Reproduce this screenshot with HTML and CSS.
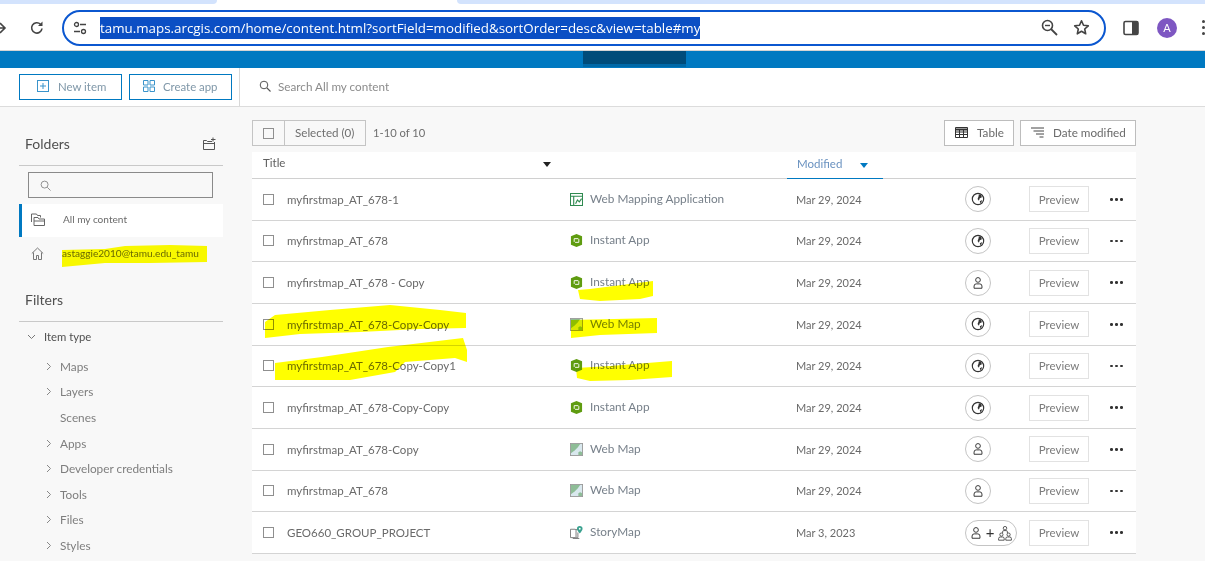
FILE: index.html
```html
<!DOCTYPE html>
<html lang="en">
<head>
<meta charset="UTF-8" />
<title>My content</title>
<link rel="stylesheet" href="styles.css">
</head>
<body>

<svg width="0" height="0" class="defs">
  <defs>
    <symbol id="i-instant" viewBox="0 0 14 14">
      <path d="M7 0l6 2.500v9L7 14 1 11.500v-9z" fill="#5f9c10"/>
      <path d="M4.500 8.500V5h4.500M9.500 5.500V9H5.500" fill="none" stroke="#fff" stroke-width="1"/>
    </symbol>
    <symbol id="i-webmap" viewBox="0 0 14 14">
      <rect x=".5" y=".5" width="13" height="13" fill="#d9e8ee" stroke="#9a9a9a"/>
      <path d="M1 1h10L8 5 5 8 1 11z" fill="#8ebd97"/>
      <path d="M9 13v-3l2-1 2 1v3z" fill="#8ebd97"/>
    </symbol>
    <symbol id="i-webapp" viewBox="0 0 14 14">
      <rect x=".5" y=".5" width="13" height="13" fill="none" stroke="#2f8a50" stroke-width="1.200"/>
      <path d="M1 3.500h12M4 4v9M6 11.500l2-4 2 2 2.500-3.500" fill="none" stroke="#2f8a50" stroke-width="1.200"/>
    </symbol>
    <symbol id="i-story" viewBox="0 0 14 14">
      <path d="M.5 3.500h5l1 .5v9l-1-.5h-5zM6.500 4l2-.5M8.500 7v5.500l-2 .5M3 13.500h7" fill="none" stroke="#777"/>
      <path d="M10.500 0a3 3 0 0 1 3 3c0 2-3 5-3 5s-3-3-3-5a3 3 0 0 1 3-3z" fill="#3aa18f"/>
      <circle cx="10.500" cy="3" r="1" fill="#fff"/>
    </symbol>
    <symbol id="i-globe" viewBox="0 0 16 16">
      <circle cx="8" cy="8" r="6.500" fill="none" stroke="#333" stroke-width="1.300"/>
      <path d="M9 2.500l2.500 1 1 2.500-2.500 1-1 3-1.500-2 1-2.500zM10 10.500l3-1.500-2 4z" fill="#333"/>
    </symbol>
    <symbol id="i-user" viewBox="0 0 16 16">
      <circle cx="8" cy="4.500" r="2.700" fill="none" stroke="#333" stroke-width="1.100"/>
      <path d="M3.500 14v-2.500a2.500 2.500 0 0 1 2.500-2.500h4a2.500 2.500 0 0 1 2.500 2.500V14z" fill="none" stroke="#333" stroke-width="1.100"/>
    </symbol>
    <symbol id="i-org" viewBox="0 0 20 20">
      <circle cx="10" cy="4" r="2.200" fill="none" stroke="#333"/>
      <path d="M7 10V8.500A1.500 1.500 0 0 1 8.500 7h3A1.500 1.500 0 0 1 13 8.500V10" fill="none" stroke="#333"/>
      <circle cx="5.500" cy="12" r="2" fill="none" stroke="#333"/>
      <circle cx="14.500" cy="12" r="2" fill="none" stroke="#333"/>
      <path d="M2 19v-2a2 2 0 0 1 2-2h3a2 2 0 0 1 2 2v2zM11 19v-2a2 2 0 0 1 2-2h3a2 2 0 0 1 2 2v2z" fill="none" stroke="#333"/>
    </symbol>
  </defs>
</svg>

<div class="tabstrip"><div class="strip-left"></div><div class="strip-right"></div></div>

<header class="browserbar">
  <svg class="nav-icon nav-forward" width="16" height="16" viewBox="0 0 16 16"><path d="M1 8h12M8 3l5 5-5 5" fill="none" stroke="#444" stroke-width="1.600"/></svg>
  <svg class="nav-icon nav-reload" width="16" height="16" viewBox="0 0 16 16"><path d="M13 8.500A5.200 5.200 0 1 1 11.500 4.200" fill="none" stroke="#444" stroke-width="1.600"/><path d="M13.500 1.500v4.500H9z" fill="#444"/></svg>
  <div class="omnibox">
    <svg class="tune" width="14" height="14" viewBox="0 0 14 14"><circle cx="3.500" cy="3.500" r="2" fill="none" stroke="#444" stroke-width="1.300"/><path d="M7 3.500h6M1 10.500h6" stroke="#444" stroke-width="1.300"/><circle cx="10.500" cy="10.500" r="2" fill="none" stroke="#444" stroke-width="1.300"/></svg>
    <span class="url">tamu.maps.arcgis.com/home/content.html?sortField=modified&amp;sortOrder=desc&amp;view=table#my</span>
    <svg class="omni-zoom" width="17" height="17" viewBox="0 0 17 17"><circle cx="6.500" cy="6.500" r="5" fill="none" stroke="#444" stroke-width="1.600"/><path d="M10 10l6 6" stroke="#444" stroke-width="1.800"/><path d="M4 6.500h5" stroke="#444" stroke-width="1.400"/></svg>
    <svg class="omni-star" width="17" height="17" viewBox="0 0 17 17"><path d="M8.500 1.800l2 4.500 4.800.5-3.600 3.200 1 4.800-4.200-2.500-4.200 2.500 1-4.800L1.700 6.800l4.800-.5z" fill="none" stroke="#444" stroke-width="1.600" stroke-linejoin="round"/></svg>
  </div>
  <svg class="side-panel" width="16" height="16" viewBox="0 0 16 16"><rect x="1" y="1.500" width="14" height="13" rx="1.500" fill="#fff" stroke="#444" stroke-width="1.600"/><rect x="9" y="1.500" width="6" height="13" fill="#444"/></svg>
  <div class="avatar">A</div>
  <div class="kebab"><i></i><i></i><i></i></div>
</header>

<div class="agol-band"><div class="agol-band-active"></div></div>

<div class="toolbar">
  <div class="toolbar-left">
    <button class="tool-btn btn-new">
      <svg width="12" height="12" viewBox="0 0 12 12"><rect x=".5" y=".5" width="11" height="11" fill="none" stroke="#3b94cb"/><path d="M6 3v6M3 6h6" stroke="#3b94cb"/></svg>
      New item
    </button>
    <button class="tool-btn btn-create">
      <svg width="12" height="12" viewBox="0 0 12 12"><path d="M.5.5h4.500v4.500H.5zM7 .5h4.500v4.500H7zM.5 7h4.500v4.500H.5zM7 7h4.500v4.500H7z" fill="none" stroke="#3b94cb"/></svg>
      Create app
    </button>
  </div>
  <div class="toolbar-search">
    <svg width="12" height="12" viewBox="0 0 12 12"><circle cx="5" cy="5" r="3.800" fill="none" stroke="#555"/><path d="M8 8l3.500 3.500" stroke="#555" stroke-width="1.100"/></svg>
    Search All my content
  </div>
</div>

<div class="page">
  <aside class="sidebar">
    <div class="side-head folders-head">
      <span>Folders</span>
      <svg width="13" height="13" viewBox="0 0 13 13"><path d="M.5 12.500V3.500h3l1 1h4.500M.5 12.500h11V5M.5 6.500h11M10 .5v4M8 2.500h4.500" fill="none" stroke="#555"/></svg>
    </div>
    <div class="folder-search">
      <svg width="11" height="11" viewBox="0 0 12 12"><circle cx="5" cy="5" r="3.800" fill="none" stroke="#888"/><path d="M8 8l3.500 3.500" stroke="#888"/></svg>
    </div>
    <div class="folder folder-active">
      <svg width="14" height="13" viewBox="0 0 14 13"><path d="M.5 9V1h5l1 1.500h3v2M3 12.500v-8h4l1 1.500h5.500v6.500zM3 8h10.500" fill="none" stroke="#666"/></svg>
      <span>All my content</span>
    </div>
    <div class="folder">
      <svg width="13" height="13" viewBox="0 0 13 13"><path d="M.8 6.500L6.500 1l5.700 5.500M2.500 5.500v7h3v-4h2v4h3v-7" fill="none" stroke="#777"/></svg>
      <span>astaggie2010@tamu.edu_tamu</span>
    </div>
    <div class="side-head filters-head"><span>Filters</span></div>
    <div class="filter-group">
      <svg class="chev" width="9" height="9" viewBox="0 0 9 9"><path d="M1 3l3.500 3.500L8 3" fill="none" stroke="#777"/></svg>
      Item type
    </div>
    <ul class="filter-list">
      <li><svg class="chev" width="9" height="9" viewBox="0 0 9 9"><path d="M3 1l3.500 3.500L3 8" fill="none" stroke="#888"/></svg>Maps</li>
      <li><svg class="chev" width="9" height="9" viewBox="0 0 9 9"><path d="M3 1l3.500 3.500L3 8" fill="none" stroke="#888"/></svg>Layers</li>
      <li class="no-chev">Scenes</li>
      <li><svg class="chev" width="9" height="9" viewBox="0 0 9 9"><path d="M3 1l3.500 3.500L3 8" fill="none" stroke="#888"/></svg>Apps</li>
      <li><svg class="chev" width="9" height="9" viewBox="0 0 9 9"><path d="M3 1l3.500 3.500L3 8" fill="none" stroke="#888"/></svg>Developer credentials</li>
      <li><svg class="chev" width="9" height="9" viewBox="0 0 9 9"><path d="M3 1l3.500 3.500L3 8" fill="none" stroke="#888"/></svg>Tools</li>
      <li><svg class="chev" width="9" height="9" viewBox="0 0 9 9"><path d="M3 1l3.500 3.500L3 8" fill="none" stroke="#888"/></svg>Files</li>
      <li><svg class="chev" width="9" height="9" viewBox="0 0 9 9"><path d="M3 1l3.500 3.500L3 8" fill="none" stroke="#888"/></svg>Styles</li>
    </ul>
  </aside>

  <main class="content">
    <div class="content-top">
      <div class="select-box"><span class="select-check"><i class="check"></i></span><span class="select-label">Selected (0)</span></div>
      <span class="count">1-10 of 10</span>
      <button class="view-btn btn-table">
        <svg width="13" height="11" viewBox="0 0 13 11"><path d="M.5.5h12v10H.5z" fill="none" stroke="#333"/><path d="M.5 2.500h12" stroke="#333" stroke-width="2"/><path d="M.5 5h12M.5 7.500h12M4.500 3v7M8.500 3v7" stroke="#333"/></svg>
        Table
      </button>
      <button class="view-btn btn-date">
        <svg width="13" height="11" viewBox="0 0 13 11"><path d="M0 1h13M2.500 4h10.500M5 7h8M8.500 10h4" stroke="#444"/></svg>
        Date modified
      </button>
    </div>

    <div class="table">
      <div class="thead">
        <div class="th-title">Title<i class="caret caret-dark"></i></div>
        <div class="th-modified">Modified<i class="caret caret-blue"></i></div>
      </div>

      <div class="row">
        <i class="check"></i><span class="title">myfirstmap_AT_678-1</span>
        <svg class="type-icon"><use href="#i-webapp"/></svg><span class="type">Web Mapping Application</span>
        <span class="date">Mar 29, 2024</span>
        <span class="share"><svg width="14" height="14"><use href="#i-globe"/></svg></span>
        <button class="preview">Preview</button><span class="dots"><i></i><i></i><i></i></span>
      </div>
      <div class="row">
        <i class="check"></i><span class="title">myfirstmap_AT_678</span>
        <svg class="type-icon"><use href="#i-instant"/></svg><span class="type">Instant App</span>
        <span class="date">Mar 29, 2024</span>
        <span class="share"><svg width="14" height="14"><use href="#i-globe"/></svg></span>
        <button class="preview">Preview</button><span class="dots"><i></i><i></i><i></i></span>
      </div>
      <div class="row">
        <i class="check"></i><span class="title">myfirstmap_AT_678 - Copy</span>
        <svg class="type-icon"><use href="#i-instant"/></svg><span class="type">Instant App</span>
        <span class="date">Mar 29, 2024</span>
        <span class="share"><svg width="14" height="14"><use href="#i-user"/></svg></span>
        <button class="preview">Preview</button><span class="dots"><i></i><i></i><i></i></span>
      </div>
      <div class="row">
        <i class="check"></i><span class="title">myfirstmap_AT_678-Copy-Copy</span>
        <svg class="type-icon"><use href="#i-webmap"/></svg><span class="type">Web Map</span>
        <span class="date">Mar 29, 2024</span>
        <span class="share"><svg width="14" height="14"><use href="#i-globe"/></svg></span>
        <button class="preview">Preview</button><span class="dots"><i></i><i></i><i></i></span>
      </div>
      <div class="row">
        <i class="check"></i><span class="title">myfirstmap_AT_678-Copy-Copy1</span>
        <svg class="type-icon"><use href="#i-instant"/></svg><span class="type">Instant App</span>
        <span class="date">Mar 29, 2024</span>
        <span class="share"><svg width="14" height="14"><use href="#i-globe"/></svg></span>
        <button class="preview">Preview</button><span class="dots"><i></i><i></i><i></i></span>
      </div>
      <div class="row">
        <i class="check"></i><span class="title">myfirstmap_AT_678-Copy-Copy</span>
        <svg class="type-icon"><use href="#i-instant"/></svg><span class="type">Instant App</span>
        <span class="date">Mar 29, 2024</span>
        <span class="share"><svg width="14" height="14"><use href="#i-globe"/></svg></span>
        <button class="preview">Preview</button><span class="dots"><i></i><i></i><i></i></span>
      </div>
      <div class="row">
        <i class="check"></i><span class="title">myfirstmap_AT_678-Copy</span>
        <svg class="type-icon"><use href="#i-webmap"/></svg><span class="type">Web Map</span>
        <span class="date">Mar 29, 2024</span>
        <span class="share"><svg width="14" height="14"><use href="#i-user"/></svg></span>
        <button class="preview">Preview</button><span class="dots"><i></i><i></i><i></i></span>
      </div>
      <div class="row">
        <i class="check"></i><span class="title">myfirstmap_AT_678</span>
        <svg class="type-icon"><use href="#i-webmap"/></svg><span class="type">Web Map</span>
        <span class="date">Mar 29, 2024</span>
        <span class="share"><svg width="14" height="14"><use href="#i-user"/></svg></span>
        <button class="preview">Preview</button><span class="dots"><i></i><i></i><i></i></span>
      </div>
      <div class="row">
        <i class="check"></i><span class="title">GEO660_GROUP_PROJECT</span>
        <svg class="type-icon"><use href="#i-story"/></svg><span class="type">StoryMap</span>
        <span class="date">Mar 3, 2023</span>
        <span class="share share-wide"><svg width="14" height="14"><use href="#i-user"/></svg><b>+</b><svg width="16" height="16"><use href="#i-org"/></svg></span>
        <button class="preview">Preview</button><span class="dots"><i></i><i></i><i></i></span>
      </div>
    </div>
  </main>
</div>

<!-- marker strokes drawn over the screenshot -->
<svg class="marker" width="1205" height="561" viewBox="0 0 1205 561">
  <path d="M62 250L105 249 125 246 170 245 207 246V262L150 263 105 263 62 267z"/>
  <path d="M265 322L275 315 330 310 390 305 440 310 466 313V328L420 329 360 332 300 334 265 338z"/>
  <path d="M275 363L322 357 388 347 463 338 467 350V362L455 358 405 362 395 372 350 380 275 380z"/>
  <path d="M578 290L590 289 653 281V296L640 299 600 301 580 299z"/>
  <path d="M571 320L657 318V333L600 335 571 338z"/>
  <path d="M576 368L610 366 672 361V377L630 380 590 381 577 378z"/>
</svg>

</body>
</html>
```

FILE: styles.css
```css
* { box-sizing: border-box; }
html, body { margin: 0; height: 561px; overflow: hidden; }
body { font-family: Lato, "Open Sans", sans-serif; font-size: 11.500px; color: #6a6a6a; background: #f8f8f8; position: relative; }
button { font-family: inherit; cursor: pointer; }
.defs { position: absolute; }

/* browser chrome */
.tabstrip { height: 4px; background: #fff; display: flex; justify-content: space-between; }
.strip-left { width: 217px; background: #d3e3fd; border-radius: 0 0 5px 0; }
.strip-right { width: 748px; background: #d3e3fd; border-radius: 0 0 0 5px; }
.browserbar { height: 47px; background: #fff; border-bottom: 1px solid #d4d4d4; display: flex; align-items: center; padding-top: 1px; }
.nav-icon { flex: none; }
.nav-forward { margin-left: -8px; }
.nav-reload { margin-left: 21px; }
.omnibox { width: 1046px; height: 36px; margin-left: 17px; border: 2px solid #0b57d0; border-radius: 18px; background: #fff; display: flex; align-items: center; padding: 0 14px 0 9px; }
.tune { flex: none; }
.url { font-family: "Open Sans", sans-serif; font-size: 13.350px; line-height: 22px; background: #0b4fc4; color: #fff; margin-left: 13px; white-space: nowrap; }
.omni-zoom { margin-left: auto; }
.omni-star { margin-left: 15px; }
.side-panel { margin-left: 17px; flex: none; }
.avatar { width: 20px; height: 20px; border-radius: 50%; background: #7e57c2; color: #fff; font-size: 11px; display: flex; align-items: center; justify-content: center; margin-left: 18px; flex: none; }
.kebab { display: flex; flex-direction: column; gap: 3px; margin-left: 25px; flex: none; }
.kebab i { width: 3px; height: 3px; border-radius: 50%; background: #444; }

.agol-band { height: 17px; background: #0079c1; }
.agol-band-active { width: 103px; height: 16px; margin-left: 583px; background: #004c7a; border-bottom: 3px solid #0068a6; }

/* toolbar */
.toolbar { height: 39px; background: #fff; border-bottom: 1px solid #dcdcdc; display: flex; }
.toolbar-left { width: 240px; border-right: 1px solid #d8d8d8; display: flex; gap: 7px; padding: 6px 0 0 19px; }
.tool-btn { height: 26px; border: 1px solid #0079c1; background: #fff; color: #7f97a8; font-size: 11.400px; display: flex; align-items: center; padding: 0 0 2px; }
.btn-new { width: 103px; padding-left: 17px; gap: 9px; }
.btn-create { width: 103px; padding-left: 13px; gap: 8px; }
.toolbar-search { display: flex; align-items: center; gap: 7px; padding: 0 0 2px 19px; color: #8b8b8b; font-size: 11.700px; }

/* left column */
.page { display: flex; }
.sidebar { width: 252px; padding-left: 19px; flex: none; }
.side-head { width: 204px; height: 25px; display: flex; justify-content: space-between; align-items: center; padding: 0 7px 0 6px; font-size: 14px; color: #505050; border-bottom: 1px solid #c9c9c9; }
.folders-head { margin-top: 26px; height: 33px; padding-bottom: 11px; }
.folder-search { width: 185px; height: 26px; margin: 6px 0 6px 9px; border: 1px solid #8a8a8a; display: flex; align-items: center; padding-left: 11px; }
.folder { width: 204px; height: 33px; display: flex; align-items: center; padding: 0 0 1px 12px; gap: 18px; font-size: 10.100px; color: #6a6a6a; }
.folder-active { background: #fff; border-left: 3px solid #0079c1; padding: 0 0 3px 9px; height: 33px; }
.filters-head { margin-top: 20px; height: 32px; padding-bottom: 13px; }
.filter-group { display: flex; align-items: center; gap: 8px; padding-left: 8px; margin-top: 5px; height: 18px; font-size: 11.300px; color: #505050; }
.filter-list { list-style: none; margin: 8.500px 0 0; padding: 0 0 0 25px; font-size: 11.800px; color: #7e7e7e; }
.filter-list li { height: 25.600px; display: flex; align-items: center; gap: 7px; }
.filter-list .no-chev { padding-left: 16px; }
.chev { flex: none; }

/* main column */
.content { width: 884px; }
.content-top { height: 45px; display: flex; align-items: flex-start; padding-top: 13px; }
.select-box { height: 26px; display: flex; border: 1px solid #c4c4c4; width: 114px; }
.select-check { width: 32px; border-right: 1px solid #c4c4c4; display: flex; align-items: center; justify-content: center; }
.select-label { display: flex; align-items: center; padding: 0 0 2px 10px; color: #6e6e6e; font-size: 11.600px; }
.count { margin-left: 7px; color: #6e6e6e; font-size: 11.200px; line-height: 25px; }
.view-btn { height: 26px; border: 1px solid #bdbdbd; background: #fff; color: #6a6a6a; font-size: 11.700px; display: flex; align-items: center; padding: 0 0 2px; }
.btn-table { width: 70px; margin-left: auto; padding-left: 10px; gap: 9px; }
.btn-date { width: 116px; margin-left: 6px; padding-left: 10px; gap: 9px; }

.check { display: block; width: 11px; height: 11px; border: 1px solid #8f8f8f; background: transparent; flex: none; }
.table { background: #fff; }
.thead { height: 27px; border-bottom: 1px solid #d0d0d0; display: flex; }
.th-title { width: 535px; padding: 4px 236px 0 11px; display: flex; justify-content: space-between; color: #606060; }
.th-modified { width: 96px; margin-bottom: -1px; border-bottom: 1px solid #0079c1; padding: 5px 0 0 10px; color: #6a92c0; display: flex; gap: 18px; }
.caret { display: block; width: 0; height: 0; border: 4.500px solid transparent; border-bottom: 0; border-top: 5px solid #222; margin-top: 6px; }
.caret-blue { border-top-color: #0079c1; }

.row { height: 41.670px; border-bottom: 1px solid #d4d4d4; display: flex; align-items: center; padding-left: 11px; }
.title { margin-left: 13px; width: 283px; white-space: nowrap; }
.type-icon { width: 13px; height: 13px; flex: none; }
.type { margin: 0 0 2px 7px; width: 206px; white-space: nowrap; color: #77808a; font-size: 11.800px; }
.date { width: 169px; white-space: nowrap; font-size: 11px; }
.share { height: 26px; min-width: 26px; border: 1px solid #c4c4c4; border-radius: 13px; background: #fff; display: flex; align-items: center; justify-content: center; gap: 3px; }
.share b { font-weight: 400; font-size: 15px; color: #333; line-height: 1; }
.share-wide { width: 52px; margin-right: -26px; }
.preview { margin-left: 38px; width: 60px; height: 26px; border: 1px solid #e2e2e2; background: #fff; color: #7b7b7b; font-size: 11.500px; padding: 0; }
.dots { display: flex; gap: 2.500px; margin-left: 21px; }
.dots i { width: 2.500px; height: 2.500px; border-radius: 50%; background: #333; }

/* yellow highlighter over the shot */
.marker { position: absolute; left: 0; top: 0; pointer-events: none; mix-blend-mode: multiply; }
.marker path { fill: #ffff00; }
```
